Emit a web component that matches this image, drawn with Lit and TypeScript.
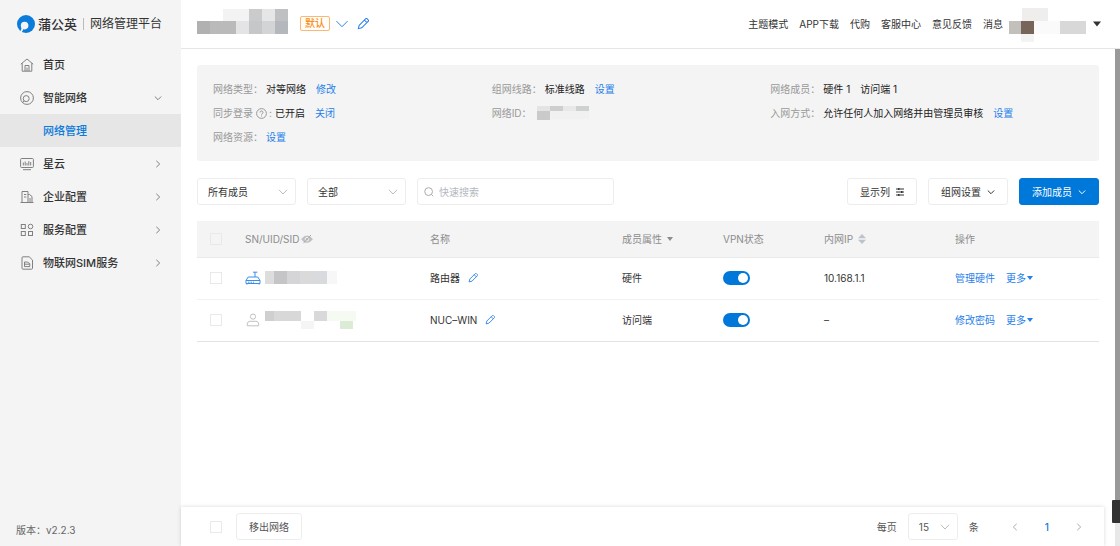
import { LitElement, html, css, svg } from "lit";
import { customElement, property } from "lit/decorators.js";
import { classMap } from "lit/directives/class-map.js";

type Tile = [number, number, number, number, string];

const penShape = svg`<path transform="rotate(45 6 6)" d="M4.200 9.600V.2a.8.8 0 0 1 .8-.8h2a.8.8 0 0 1 .8.8v9.400L6 12.600zM4.200 2.200h3.600"/>`;

const icons: Record<string, { w: number; h: number; box: string; body: unknown }> = {
  home: {
    w: 14, h: 14, box: "0 0 14 14",
    body: svg`<path d="M.8 6.200 7 1l6.200 5.200M2.200 5.200v8h9.600v-8M5 13V7.500h4V13M7 9.500V13"/>`,
  },
  net: {
    w: 14, h: 14, box: "0 0 14 14",
    body: svg`<circle cx="7" cy="7" r="6.400"/><circle cx="6.200" cy="7.600" r="3"/><path d="M4.200 9.800 2.600 11.600"/>`,
  },
  cloud: {
    w: 14, h: 14, box: "0 0 14 14",
    body: svg`<rect x=".6" y="1.500" width="12.800" height="9" rx="1"/><path d="M3 12.700h8M3.300 5.500v3M5.200 4.500v4M7 6v2.500M8.800 4v4.500M10.700 5v3.500"/>`,
  },
  company: {
    w: 14, h: 14, box: "0 0 14 14",
    body: svg`<path d="M.5 12.500h13M2 12.500v-11h6v11M8 4.500h1.500L12 6.500v6M4 4.500h2.300M4 7h2.300M10 8v4.500"/>`,
  },
  service: {
    w: 14, h: 14, box: "0 0 14 14",
    body: svg`<rect x="1.300" y="1.500" width="4" height="4"/><circle cx="10.500" cy="3.500" r="2.300"/><rect x="1.300" y="8.500" width="4" height="4"/><rect x="8.500" y="8.500" width="4" height="4"/>`,
  },
  sim: {
    w: 14, h: 14, box: "0 0 14 14",
    body: svg`<path d="M3 .8h6.200L12.500 4v8.200a1 1 0 0 1-1 1H3a1 1 0 0 1-1-1V1.800a1 1 0 0 1 1-1z"/><path d="M4.500 6h2.700l2.600 1.600v3H4.500zM4.500 8.200h5.200"/>`,
  },
  down: { w: 8, h: 8, box: "0 0 8 8", body: svg`<path d="M.8 2.500 4 5.700l3.200-3.200"/>` },
  right: { w: 8, h: 8, box: "0 0 8 8", body: svg`<path d="M2.300.8 5.700 4 2.300 7.200"/>` },
  left: { w: 8, h: 8, box: "0 0 8 8", body: svg`<path d="M5.700.8 2.300 4l3.400 3.200"/>` },
  wide: { w: 12, h: 8, box: "0 0 12 8", body: svg`<path d="M.5 1.200 6 6.700l5.500-5.500"/>` },
  select: { w: 10, h: 8, box: "0 0 10 8", body: svg`<path d="M1 1.800 5 6l4-4.200"/>` },
  pen: { w: 12, h: 12, box: "0 0 12 12", body: penShape },
  smallpen: { w: 10, h: 10, box: "0 0 12 12", body: penShape },
  search: { w: 10, h: 10, box: "0 0 10 10", body: svg`<circle cx="4.600" cy="4.600" r="3.900"/><path d="m7.400 7.400 1.800 1.800"/>` },
  help: {
    w: 11, h: 11, box: "0 0 11 11",
    body: svg`<circle cx="5.500" cy="5.500" r="4.900"/><path d="M4 4.500a1.500 1.500 0 1 1 2.300 1.200c-.6.3-.8.6-.8 1.100M5.500 7.600v.9"/>`,
  },
  columns: {
    w: 8, h: 8, box: "0 0 8 8",
    body: svg`<path d="M0 1h8M0 4h8M0 7h8"/><path stroke-width="2" d="M2 1h1.500M5 4h1.500M2 7h1.500"/>`,
  },
  eye: {
    w: 12, h: 10, box: "0 0 12 10",
    body: svg`<path fill="#bcbec0" stroke="#bcbec0" d="M.6 5.200Q3 2 6 2t5.400 3.200Q9 8.300 6 8.300T.6 5.200z"/><circle cx="6" cy="5.200" r="1.800" stroke="#f4f4f4"/><path stroke="#a8aaac" d="M2.500 9.200 10 1"/>`,
  },
  router: {
    w: 16, h: 14, box: "0 0 16 14",
    body: svg`<path d="M1 9.500 3.200 6h9.600L15 9.500zM1 9.500v3h14v-3M10 6V1.200M8 1.200h4.400M3 11.200h1.500M5.500 11.200H7M8 11.200h1M2 13v.6M14 13v.6"/>`,
  },
  user: {
    w: 14, h: 14, box: "0 0 14 14",
    body: svg`<circle cx="7" cy="3.600" r="2.600"/><path d="M1.300 12.800v-1.600c0-1.700 1.200-2.900 2.900-2.900h5.600c1.700 0 2.900 1.200 2.900 2.900v1.600z"/>`,
  },
  logo: {
    w: 18, h: 18, box: "0 0 18 18",
    body: svg`<circle cx="9" cy="9" r="9" fill="#0b7bdc" stroke="none"/><circle cx="7.600" cy="10.600" r="3.800" fill="#f4f4f4" stroke="none"/><path stroke="#f4f4f4" stroke-width="2" d="M5.600 12.500Q5.600 15 3.400 17.400"/>`,
  },
  caret: { w: 8, h: 6, box: "0 0 8 6", body: svg`<path stroke="none" fill="currentColor" d="M0 .5h8L4 5.500z"/>` },
  smallcaret: { w: 6, h: 4, box: "0 0 6 4", body: svg`<path stroke="none" fill="currentColor" d="M0 0h6L3 4z"/>` },
  sort: {
    w: 8, h: 10, box: "0 0 8 10",
    body: svg`<path stroke="none" fill="#bfc2c8" d="M0 4.200 4 0l4 4.200zM0 5.800h8L4 10z"/>`,
  },
};

@customElement("ui-icon")
class UiIcon extends LitElement {
  @property() name = "";
  static styles = css`
    :host { display: inline-flex; flex: none; }
    svg { display: block; fill: none; stroke: currentColor; stroke-width: 1; }
  `;
  render() {
    const i = icons[this.name];
    return html`<svg width=${i.w} height=${i.h} viewBox=${i.box} aria-hidden="true">${i.body}</svg>`;
  }
}

@customElement("masked-value")
class MaskedValue extends LitElement {
  @property({ attribute: false }) tiles: Tile[] = [];
  static styles = css`
    :host { display: inline-flex; flex: none; }
    svg { display: block; }
  `;
  render() {
    const w = Math.max(...this.tiles.map((t) => t[0] + t[2]));
    const h = Math.max(...this.tiles.map((t) => t[1] + t[3]));
    return html`<svg width=${w} height=${h} shape-rendering="crispEdges" aria-hidden="true">
      ${this.tiles.map((t) => svg`<rect x=${t[0]} y=${t[1]} width=${t[2]} height=${t[3]} fill=${t[4]}></rect>`)}
    </svg>`;
  }
}

const networkName: Tile[] = [
  [26, 0, 26, 12, "#f3f3f3"], [52, 0, 13, 12, "#cacbcc"], [65, 0, 13, 12, "#e6e6e7"], [78, 0, 13, 12, "#bfc0c2"],
  [0, 12, 13, 13, "#b1b1b2"], [13, 12, 26, 13, "#bababb"], [39, 12, 13, 13, "#e4e4e6"], [52, 12, 13, 13, "#c6c7c9"],
  [65, 12, 13, 13, "#d3d4d6"], [78, 12, 13, 13, "#b4b8bd"],
];
const account: Tile[] = [
  [13, 0, 26, 13, "#efeeed"], [0, 13, 12, 13, "#c3bfba"], [12, 13, 13, 13, "#766558"], [25, 13, 26, 13, "#fafafa"],
  [51, 13, 26, 13, "#d8d8d9"], [12, 26, 13, 8, "#f3f3f3"],
];
const networkId: Tile[] = [
  [0, 0, 13, 5, "#e4e4e4"], [13, 0, 13, 5, "#cdcfce"], [26, 0, 13, 5, "#e8e8e8"], [39, 0, 13, 5, "#cfd1d0"],
  [0, 5, 13, 9, "#c9cbca"], [13, 5, 39, 8, "#f1f1f1"],
];
const rows = [
  {
    id: "router", icon: "router", name: "路由器", kind: "硬件", ip: "10.168.1.1", action: "管理硬件",
    tiles: [[0, 0, 9, 13, "#dedddd"], [9, 0, 13, 13, "#c5c5c8"], [22, 0, 13, 13, "#d5d5d7"], [35, 0, 14, 13, "#dadada"],
      [49, 0, 13, 13, "#d9dade"], [62, 0, 10, 13, "#f7f7f7"]] as Tile[],
  },
  {
    id: "nuc", icon: "user", name: "NUC–WIN", kind: "访问端", ip: "–", action: "修改密码",
    tiles: [[0, 0, 9, 10, "#cfcfcf"], [9, 0, 27, 10, "#d8d8d8"], [49, 0, 13, 10, "#d9d9db"], [36, 10, 13, 8, "#f5f5f5"],
      [62, 0, 29, 10, "#f5faf3"], [75, 10, 13, 8, "#dcebd6"]] as Tile[],
  },
];
const nav = [
  { icon: "home", label: "首页", arrow: "" },
  { icon: "net", label: "智能网络", arrow: "down" },
  { icon: "", label: "网络管理", arrow: "", active: true },
  { icon: "cloud", label: "星云", arrow: "right" },
  { icon: "company", label: "企业配置", arrow: "right" },
  { icon: "service", label: "服务配置", arrow: "right" },
  { icon: "sim", label: "物联网SIM服务", arrow: "right" },
];

@customElement("app-root")
class AppRoot extends LitElement {
  static styles = css`
    :host {
      display: flex; position: relative; height: 100vh; overflow: hidden; background: #fff; color: #333;
      font: 10px/16px Inter, "Noto Sans CJK SC", sans-serif;
    }
    * { box-sizing: border-box; }
    a { color: #2680eb; text-decoration: none; }
    button, input, select { font: inherit; color: inherit; margin: 0; }
    button { cursor: pointer; }
    .bare { border: 0; padding: 0; background: none; display: inline-flex; align-items: center; }
    .blue { color: #2680eb; }

    .side { width: 181px; flex: none; display: flex; flex-direction: column; background: #f4f4f4; }
    .brand { height: 48px; display: flex; align-items: center; padding-left: 17px; color: #333; white-space: nowrap; }
    .brand-name { margin-left: 3px; font-size: 13px; font-weight: 500; }
    .brand-sub { margin-left: 6px; padding-left: 6px; border-left: 1px solid #bbb; font-size: 12px; line-height: 12px; }
    .item {
      height: 33px; display: flex; align-items: center; padding: 0 19px 0 20px; font-size: 11px; color: #333;
      font-weight: 500;
    }
    .item ui-icon { color: #808080; }
    .glyph { width: 23px; display: flex; }
    .item .label { flex: 1; }
    .item.active { background: #e6e6e6; color: #0b7bdc; }
    .version { margin: auto 0 8px 16px; color: #666; }

    .main { flex: 1; min-width: 0; display: flex; flex-direction: column; }
    .top {
      height: 49px; flex: none; display: flex; align-items: center; padding: 0 19px 1px 16px;
      border-bottom: 1px solid #e6e6e6;
    }
    .top masked-value { margin-top: -4px; }
    .tag {
      margin: 0 6px 0 12px; padding: 0 4px; border: 1px solid #fbb873; border-radius: 2px; color: #fa8c16;
      line-height: 13px; font-weight: 500; background: #fffdfa;
    }
    .top .bare + .bare { margin-left: 9px; }
    .links { margin-left: auto; display: flex; align-items: center; gap: 11px; }
    .links a { color: #333; }
    .user { display: flex; align-items: center; gap: 7px; margin-left: -5px; }
    .user masked-value { margin-top: 2px; }

    .content { flex: 1; padding: 16px 21px 0 16px; }
    .info {
      display: grid; grid-template-columns: repeat(3, 1fr); grid-auto-rows: 24px; align-items: center;
      padding: 12px 50px 12px 16px; background: #f4f4f4; border-radius: 3px; white-space: nowrap;
    }
    .fact { display: flex; align-items: center; gap: 10px; color: #222; }
    .pair { display: flex; align-items: center; gap: 3px; }
    .fact .key { color: #999; display: flex; align-items: center; }
    .fact .key ui-icon { margin: 0 2px 0 3px; }
    .fact masked-value { margin-left: 2px; }

    .tools { display: flex; gap: 11px; margin: 17px 0 16px; }
    .box {
      height: 27px; display: flex; align-items: center; border: 1px solid #ededed; border-radius: 3px; background: #fff;
    }
    .pick { position: relative; width: 99px; }
    .pick select {
      appearance: none; width: 100%; height: 100%; border: 0; padding: 0 24px 0 10px; background: none; outline: 0;
    }
    .pick ui-icon { position: absolute; right: 7px; color: #bbb; pointer-events: none; }
    .pick.small { width: 50px; }
    .search { width: 197px; padding: 0 6px; gap: 5px; color: #aaa; }
    .search input { flex: 1; min-width: 0; border: 0; outline: 0; padding: 0; background: none; }
    .search input::placeholder { color: #b4b8bf; opacity: 1; }
    button.box { padding: 0 12px; gap: 6px; white-space: nowrap; }
    .push { margin-left: auto; }
    button.primary { background: #0078d9; border-color: #0078d9; color: #fff; }

    table { width: 100%; border-collapse: separate; border-spacing: 0; table-layout: fixed; }
    th, td { padding: 0; text-align: left; vertical-align: middle; white-space: nowrap; }
    th { height: 37px; background: #f4f4f4; border-bottom: 1px solid #e9e9e9; color: #8c8c8c; font-weight: 400; }
    td { height: 42px; padding-bottom: 2px; border-bottom: 1px solid #f1f1f1; }
    tr:last-child td { border-bottom-color: #e3e3e3; }
    th:first-child, td:first-child { padding-left: 13px; }
    .c-check { width: 48px; }
    .c-sn { width: 185px; }
    .c-name { width: 192px; }
    .c-kind, .c-vpn { width: 101px; }
    .c-ip { width: 131px; }
    .cell { display: flex; align-items: center; }
    .cell .gap { margin-left: 8px; }
    .cell .near { margin-left: 5px; }
    .cell .eye { margin-left: 2px; }
    .cell .wide { margin-left: 11px; }
    .sn ui-icon { width: 16px; justify-content: center; margin-right: 4px; }
    .sn .router { color: #3b8fe8; }
    .sn .user-icon { color: #c0c0c0; }
    .more-btn { gap: 1px; }
    .tick {
      appearance: none; display: block; width: 12px; height: 12px; border: 1px solid #e9e9e9; background: transparent;
    }
    .switch {
      appearance: none; display: block; width: 27px; height: 14px; border-radius: 7px; background: #0078d9; padding: 2px;
    }
    .switch::before {
      content: ""; display: block; width: 10px; height: 10px; margin-left: auto; border-radius: 50%; background: #fff;
    }

    .foot {
      height: 39px; flex: none; display: flex; align-items: center; margin-right: 16px; padding: 0 21px 0 29px;
      box-shadow: 0 0 4px rgba(0, 0, 0, 0.16); color: #555; background: #fff;
    }
    .foot .remove { margin-left: 14px; }
    .foot label, .pages { display: flex; align-items: center; gap: 11px; }
    .foot label { margin-left: auto; }
    .pages { margin-left: 32px; gap: 26px; color: #aaa; }
    .pages .now { color: #0b7bdc; font-weight: 500; }
    .bar { position: absolute; right: 0; top: 49px; bottom: 0; width: 5px; background: #e8e8e8; }
    .thumb { height: 92%; background: #999; }
    .dock { position: absolute; right: 0; bottom: 23px; width: 8px; height: 23px; background: #333; border-radius: 1px 0 0 1px; }
  `;

  private tick(label: string) {
    return html`<input class="tick" type="checkbox" aria-label=${label} />`;
  }

  private fact(key: unknown, value: unknown, link = "") {
    return html`<div class="fact">
      <span class="pair"><span class="key">${key}</span>${value}</span>
      ${link ? html`<a href="#">${link}</a>` : ""}
    </div>`;
  }

  render() {
    return html`
      <aside class="side">
        <div class="brand">
          <ui-icon name="logo"></ui-icon><span class="brand-name">蒲公英</span><span class="brand-sub">网络管理平台</span>
        </div>
        <nav>
          ${nav.map((n) => html`
            <a href="#" class=${classMap({ item: true, active: !!n.active })}>
              <span class="glyph">${n.icon ? html`<ui-icon name=${n.icon}></ui-icon>` : ""}</span>
              <span class="label">${n.label}</span>
              ${n.arrow ? html`<ui-icon name=${n.arrow}></ui-icon>` : ""}
            </a>`)}
        </nav>
        <div class="version">版本：v2.2.3</div>
      </aside>
      <div class="main">
        <header class="top">
          <masked-value .tiles=${networkName}></masked-value>
          <span class="tag">默认</span>
          <button class="bare blue" aria-label="切换网络"><ui-icon name="wide"></ui-icon></button>
          <button class="bare blue" aria-label="编辑名称"><ui-icon name="pen"></ui-icon></button>
          <nav class="links">
            ${["主题模式", "APP下载", "代购", "客服中心", "意见反馈", "消息"].map((t) => html`<a href="#">${t}</a>`)}
            <button class="bare user" aria-label="账号">
              <masked-value .tiles=${account}></masked-value><ui-icon name="caret"></ui-icon>
            </button>
          </nav>
        </header>
        <main class="content">
          <section class="info">
            ${this.fact("网络类型：", "对等网络", "修改")}
            ${this.fact("组网线路：", "标准线路", "设置")}
            <div class="fact"><span class="pair"><span class="key">网络成员：</span>硬件 1</span><span>访问端 1</span></div>
            ${this.fact(html`同步登录<ui-icon name="help"></ui-icon>:`, "已开启", "关闭")}
            ${this.fact("网络ID：", html`<masked-value .tiles=${networkId}></masked-value>`)}
            ${this.fact("入网方式：", "允许任何人加入网络并由管理员审核", "设置")}
            <div class="fact"><span class="pair"><span class="key">网络资源：</span><a href="#">设置</a></span></div>
          </section>
          <div class="tools">
            <div class="box pick"><select aria-label="成员"><option>所有成员</option></select><ui-icon name="select"></ui-icon></div>
            <div class="box pick"><select aria-label="状态"><option>全部</option></select><ui-icon name="select"></ui-icon></div>
            <label class="box search"><ui-icon name="search"></ui-icon><input type="text" placeholder="快速搜索" aria-label="快速搜索" /></label>
            <button class="box push">显示列<ui-icon name="columns"></ui-icon></button>
            <button class="box">组网设置<ui-icon name="down"></ui-icon></button>
            <button class="box primary">添加成员<ui-icon name="down"></ui-icon></button>
          </div>
          <table>
            <thead>
              <tr>
                <th class="c-check">${this.tick("全选")}</th>
                <th class="c-sn"><div class="cell">SN/UID/SID<ui-icon class="eye" name="eye"></ui-icon></div></th>
                <th class="c-name">名称</th>
                <th class="c-kind"><div class="cell">成员属性<ui-icon class="near" name="smallcaret"></ui-icon></div></th>
                <th class="c-vpn">VPN状态</th>
                <th class="c-ip"><div class="cell">内网IP<ui-icon class="near" name="sort"></ui-icon></div></th>
                <th>操作</th>
              </tr>
            </thead>
            <tbody>
              ${rows.map((r) => html`
                <tr>
                  <td>${this.tick(r.name)}</td>
                  <td><div class="cell sn">
                    <ui-icon class=${r.icon === "router" ? "router" : "user-icon"} name=${r.icon}></ui-icon>
                    <masked-value .tiles=${r.tiles}></masked-value>
                  </div></td>
                  <td><div class="cell">${r.name}<button class="bare blue gap" aria-label="编辑"><ui-icon name="smallpen"></ui-icon></button></div></td>
                  <td>${r.kind}</td>
                  <td><input class="switch" type="checkbox" role="switch" checked aria-label="VPN状态" /></td>
                  <td>${r.ip}</td>
                  <td><div class="cell"><a href="#">${r.action}</a><button class="bare blue wide more-btn">更多<ui-icon name="smallcaret"></ui-icon></button></div></td>
                </tr>`)}
            </tbody>
          </table>
        </main>
        <footer class="foot">
          ${this.tick("全选")}
          <button class="box remove">移出网络</button>
          <label>每页<span class="box pick small"><select><option>15</option></select><ui-icon name="select"></ui-icon></span>条</label>
          <div class="pages">
            <button class="bare" aria-label="上一页"><ui-icon name="left"></ui-icon></button>
            <button class="bare now">1</button>
            <button class="bare" aria-label="下一页"><ui-icon name="right"></ui-icon></button>
          </div>
        </footer>
      </div>
      <div class="bar"><div class="thumb"></div></div>
      <div class="dock"></div>
    `;
  }
}
